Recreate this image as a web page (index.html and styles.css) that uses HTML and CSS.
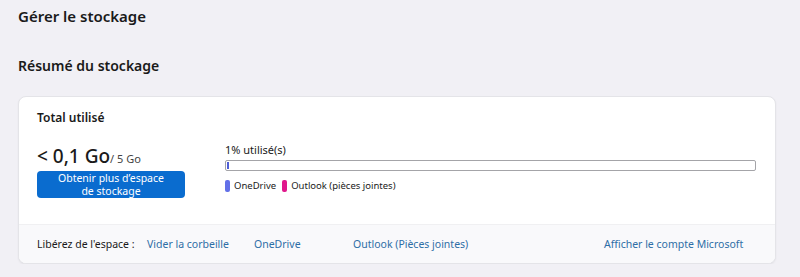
FILE: index.html
```html
<!DOCTYPE html>
<html lang="fr">
<head>
    <meta charset="UTF-8">
    <title>Gérer le stockage</title>
    <link rel="stylesheet" href="styles.css">
</head>
<body>
    <h1 class="pageTitle">Gérer le stockage</h1>
    <h2 class="sectionTitle">Résumé du stockage</h2>
    <div class="card">
        <div class="card_main">
            <div class="card_label">Total utilisé</div>
            <div class="card_row">
                <div class="usage">
                    <div class="usage_amount"><span class="usage_big">&lt; 0,1 Go</span><span class="usage_small">/ 5 Go</span></div>
                    <button class="btnBlue">Obtenir plus d’espace<br>de stockage</button>
                </div>
                <div class="meter">
                    <div class="meter_label">1% utilisé(s)</div>
                    <div class="meter_bar"><div class="meter_fill" style="width:2px"></div></div>
                    <div class="legend">
                        <span class="legend_dot dotBlue"></span><span class="legend_text">OneDrive</span>
                        <span class="legend_dot dotPink"></span><span class="legend_text">Outlook (pièces jointes)</span>
                    </div>
                </div>
            </div>
        </div>
        <div class="card_footer">
            <span class="footer_label">Libérez de l'espace :</span>
            <a class="link linkTrash">Vider la corbeille</a>
            <a class="link linkDrive">OneDrive</a>
            <a class="link linkOutlook">Outlook (Pièces jointes)</a>
            <a class="link linkAccount">Afficher le compte Microsoft</a>
        </div>
    </div>
</body>
</html>
```

FILE: styles.css
```css
body{
    margin:0;
    background:#f1f0f5;
    font-family:"Noto Sans","Open Sans",sans-serif;
    color:#1a1a1a;
}
.pageTitle{
    margin:0;
    padding:4px 0 0 18px;
    height:28px;
    line-height:24px;
    font-size:15px;
    font-weight:600;
}
.sectionTitle{
    margin:0;
    padding:22px 0 0 18px;
    height:42px;
    line-height:24px;
    font-size:14px;
    font-weight:600;
}
.card{
    margin-left:18px;
    width:756px;
    border:1px solid #e4e4e8;
    border-radius:8px;
    background:#fff;
    overflow:hidden;
    box-shadow:0 1px 2px rgba(0,0,0,0.06);
}
.card_main{
    height:127px;
    padding:0 19px 0 18px;
    box-sizing:border-box;
}
.card_label{
    padding-top:11px;
    height:26px;
    line-height:20px;
    font-size:12px;
    font-weight:600;
}
.card_row{
    display:flex;
    margin-top:8px;
}
.usage{
    width:188px;
}
.usage_amount{
    height:28px;
    line-height:28px;
    white-space:nowrap;
}
.usage_big{
    font-size:19px;
    font-weight:500;
}
.usage_small{
    font-size:11px;
    color:#444;
}
.btnBlue{
    display:block;
    margin-top:1px;
    width:148px;
    height:27px;
    padding:0;
    border:none;
    border-radius:4px;
    background:#0a6ccf;
    color:#fff;
    font-family:inherit;
    font-size:10.5px;
    line-height:13px;
}
.meter{
    flex:1;
    padding-top:1px;
}
.meter_label{
    height:17px;
    line-height:14px;
    font-size:11px;
}
.meter_bar{
    height:11px;
    border:1px solid #a4a4a8;
    border-radius:2px;
    box-sizing:border-box;
    padding:1px 0 1px 1px;
}
.meter_fill{
    height:100%;
    background:#4f5fd6;
}
.legend{
    display:flex;
    align-items:center;
    margin-top:8px;
    font-size:9.5px;
}
.legend_dot{
    width:5px;
    height:12px;
    border-radius:2px;
    margin-right:4px;
}
.dotBlue{
    background:#6270e8;
}
.dotPink{
    background:#e0188c;
}
.legend_text{
    margin-right:6px;
}
.card_footer{
    display:flex;
    align-items:center;
    height:38px;
    padding-left:18px;
    background:#f9f9fb;
    border-top:1px solid #f0f0f2;
    font-size:10.5px;
}
.footer_label{
    width:110px;
}
.link{
    color:#2e6ea6;
    cursor:pointer;
}
.linkTrash{
    width:107px;
}
.linkDrive{
    width:99px;
}
.linkOutlook{
    width:251px;
}
```
